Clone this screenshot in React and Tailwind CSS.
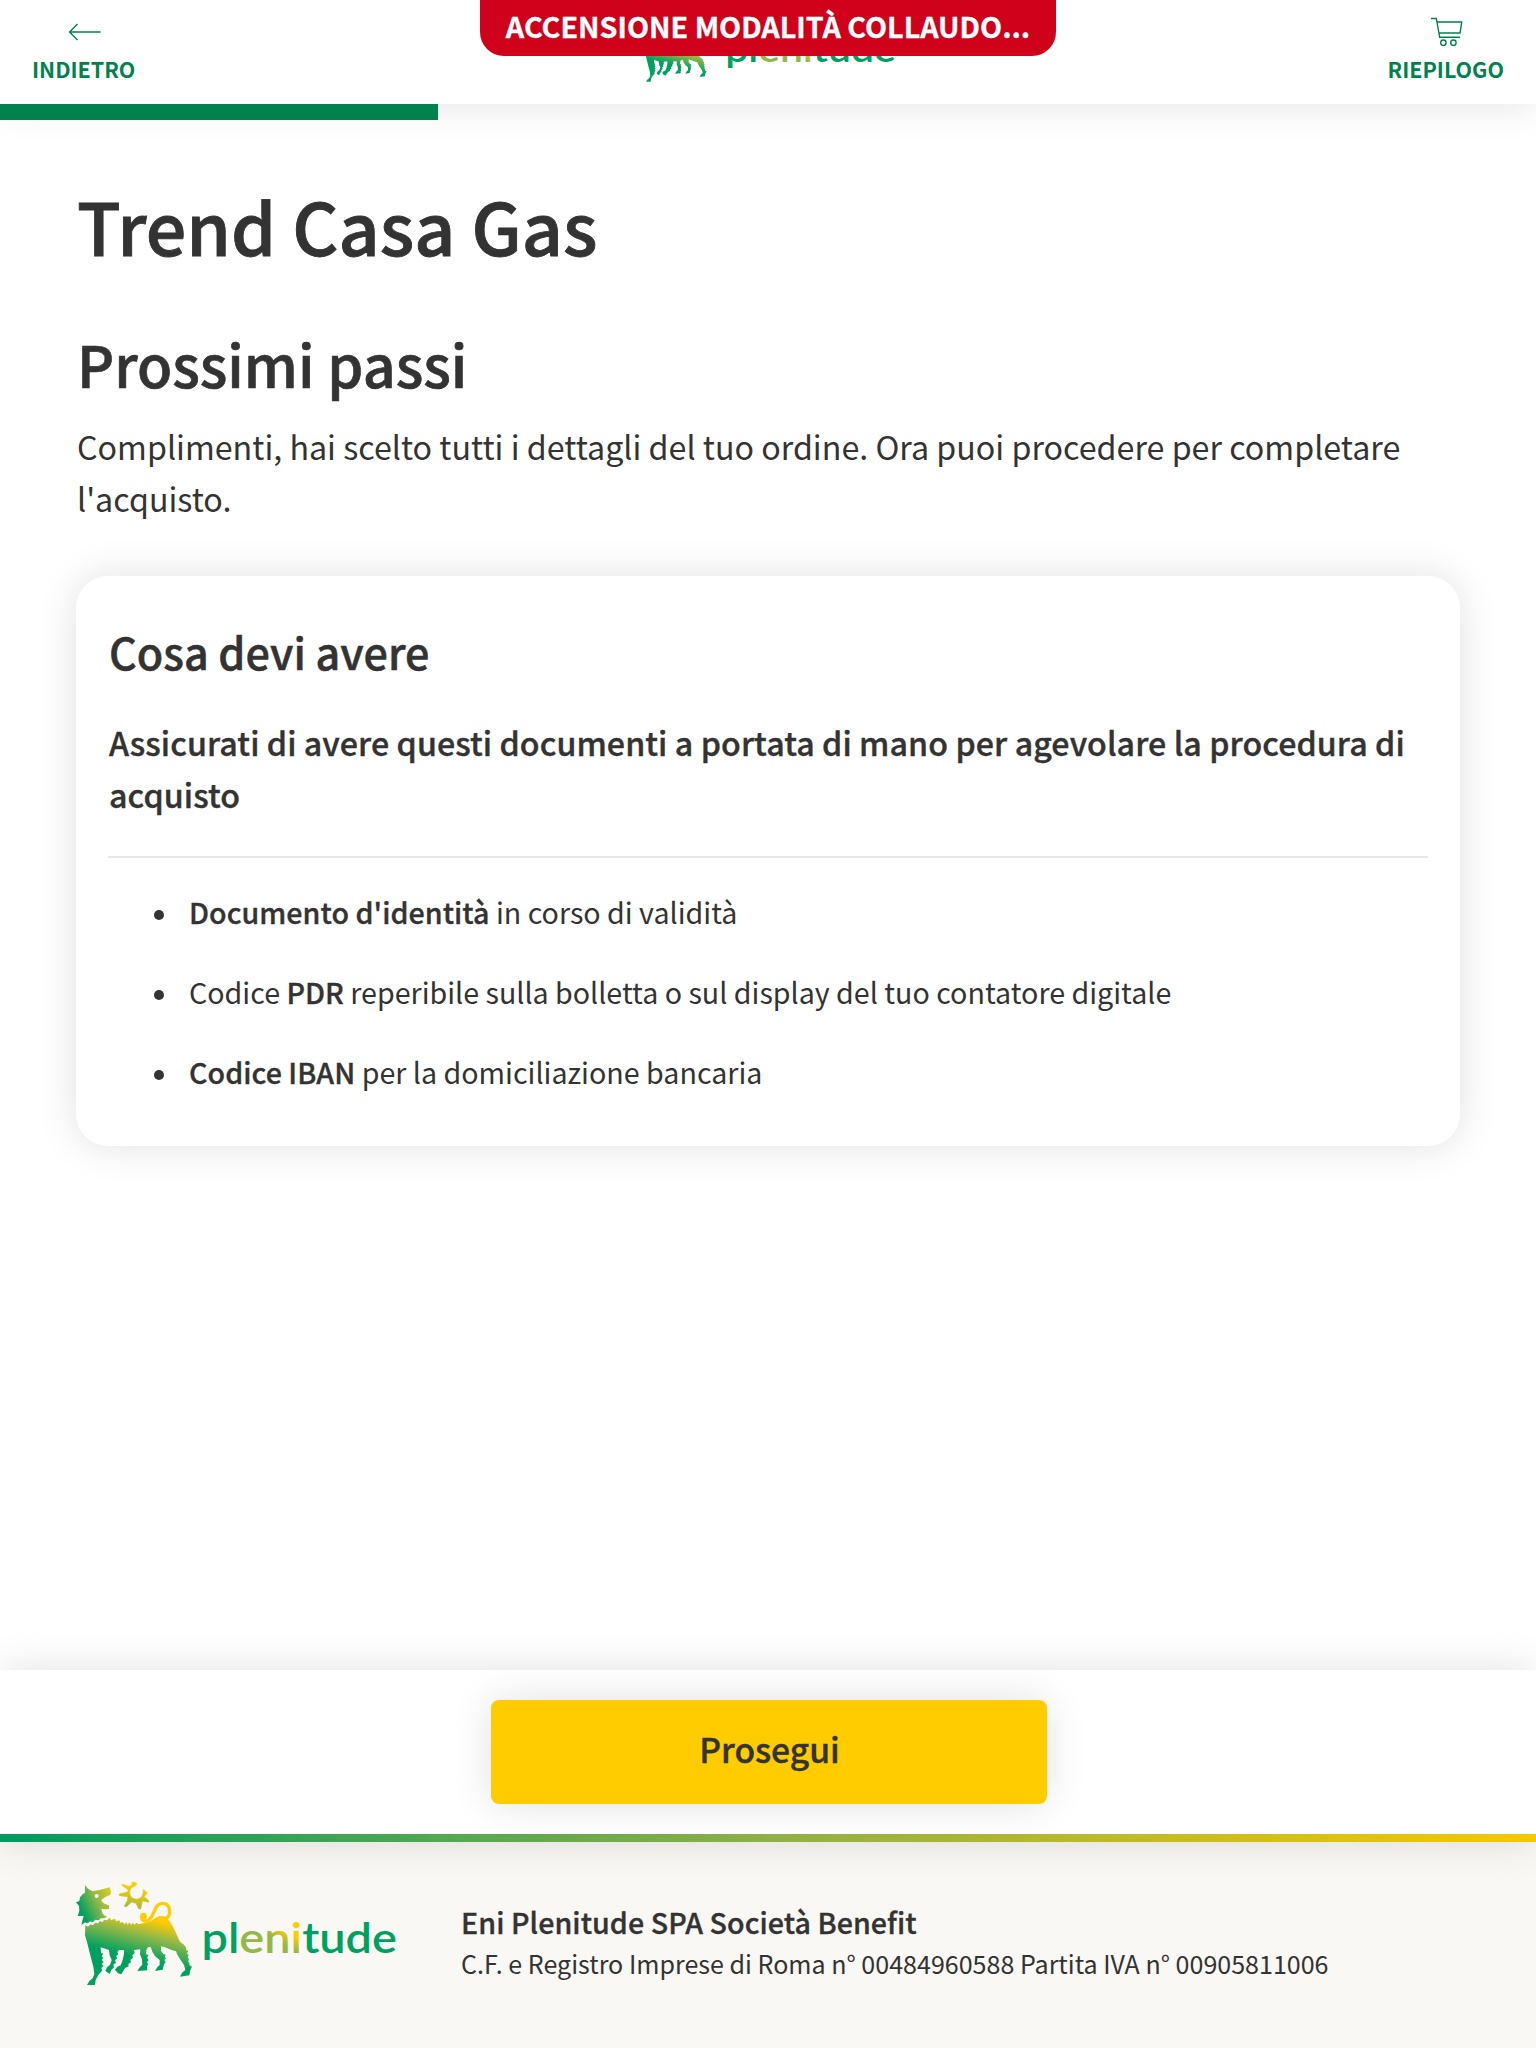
const SHADOW = "shadow-[0_0_40px_rgba(0,0,0,0.12)]";
const SEMIBOLD = "font-medium [-webkit-text-stroke:0.012em_currentColor]";

function Dog({ id }) {
  return (
    <g>
      <defs>
        <linearGradient id={`${id}-body`} gradientUnits="userSpaceOnUse" x1="290" y1="140" x2="255" y2="280">
          <stop offset="0.08" stopColor="#ffcc00" />
          <stop offset="0.43" stopColor="#93b848" />
          <stop offset="0.92" stopColor="#00a160" />
        </linearGradient>
        <linearGradient id={`${id}-head`} gradientUnits="userSpaceOnUse" x1="62" y1="118" x2="155" y2="72">
          <stop offset="0" stopColor="#00a160" />
          <stop offset="0.55" stopColor="#93b848" />
          <stop offset="1" stopColor="#d6cb1c" />
        </linearGradient>
        <linearGradient id={`${id}-sun`} gradientUnits="userSpaceOnUse" x1="235" y1="55" x2="218" y2="125">
          <stop offset="0" stopColor="#ffcc00" />
          <stop offset="1" stopColor="#93b848" />
        </linearGradient>
      </defs>
      <path
        fill={`url(#${id}-head)`}
        fillRule="evenodd"
        d="M75 45L84 56L98 64L128 58L149 52L153 69L150 75L136 81L124 89L127 96L135 102L147 106L147 117L135 118L124 116L127 130L134 137L142 140L132 145L121 145L117 151L106 149L98 157L90 154L83 160L75 157L64 166L67 152L71 138L53 138L58 122L57 108L48 97L58 93L60 82L68 73L75 68ZM110 72A6 6 0 1 0 110 84A6 6 0 1 0 110 72Z"
      />
      <path
        fill={`url(#${id}-body)`}
        d="M76 165L84 170L92 163L98 166L106 158L114 160L120 153L128 156L132 149L140 151L150 143L153 151L160 148L166 147L168 154L178 151L181 158L188 156L194 163L199 156L203 164L208 157L213 164L219 158L223 164L229 158L236 162L250 160L264 156L272 153L285 145L298 138L313 139L322 145L333 160L343 178L352 198L360 215L372 224L379 234L378 240L385 242L381 250L386 255L383 262L387 268L384 275L389 279L388 285L396 290L391 300L388 316L360 320L366 308L376 300L372 285L362 270L352 254L348 244L335 240L315 232L303 229L303 242L310 252L317 254L314 260L318 266L313 270L317 277L312 283L310 290L308 299L285 303L293 290L299 285L299 270L285 258L277 245L272 231L264 232L259 240L258 252L266 256L261 263L266 270L261 276L264 283L261 290L262 301L232 303L240 291L247 284L246 268L240 253L241 238L222 240L224 250L217 256L219 263L211 269L213 277L205 282L206 289L195 294L184 313L174 310L165 299L172 290L182 286L188 270L192 252L192 240L177 240L172 246L175 253L168 258L172 265L165 271L168 278L160 284L162 292L154 300L149 312L136 302L142 290L150 285L155 270L149 256L147 240L136 236L122 232L123 248L130 252L125 258L130 264L125 270L131 276L125 282L131 288L124 294L127 301L115 315L107 330L105 345L81 345L88 333L98 325L103 312L100 290L92 260L82 220L75 195Z"
      />
      <path
        fill="none"
        stroke="#ffcc00"
        strokeWidth="10"
        strokeLinecap="round"
        d="M311 148C326 144 330 132 329 122C328 106 318 99 306 100C288 101 286 120 276 138C268 153 252 157 246 148C241 139 246 132 252 134C257 136 257 140 254 143"
      />
      <path
        fill={`url(#${id}-sun)`}
        stroke={`url(#${id}-sun)`}
        strokeWidth="2"
        d="M187 42L205 49L217 46L215 38L222 36L231 41L225 48A20 20 0 1 0 249 70L250 58L256 64L262 68L255 77L252 80L267 92L266 97L248 92L246 98L242 117L236 116L228 100L215 96L198 111L193 108L202 92L204 80L178 77L178 72L203 66L205 60L186 46Z"
      />
    </g>
  );
}

function Wordmark({ id }) {
  return (
    <g>
      <defs>
        <linearGradient id={`${id}-eni`} gradientUnits="userSpaceOnUse" x1="70" y1="-2" x2="84" y2="-24">
          <stop offset="0.4" stopColor="#93b848" />
          <stop offset="0.9" stopColor="#ffcc00" />
        </linearGradient>
      </defs>
      <text
        x="-2.5"
        y="0"
        textLength="195.5"
        lengthAdjust="spacingAndGlyphs"
        fontSize="41.5"
        fontWeight="600"
        fontFamily="Lato, sans-serif"
        fill="#00a160"
      >
        pl<tspan fill={`url(#${id}-eni)`}>eni</tspan>tude
      </text>
    </g>
  );
}

function FooterLogo() {
  return (
    <svg className="block h-[130px] w-[340px] shrink-0" viewBox="0 0 340 130" role="img" aria-label="plenitude">
      <g transform="scale(0.33333)">
        <Dog id="footer" />
      </g>
      <g transform="translate(144 82.6)">
        <Wordmark id="footer-word" />
      </g>
    </svg>
  );
}

function HeaderLogo() {
  return (
    <svg className="block h-[84px] w-[270px]" viewBox="0 0 270 84" role="img" aria-label="plenitude">
      <g transform="translate(-2.5 15.5) scale(0.192)">
        <Dog id="header" />
      </g>
      <g transform="translate(94.3 61.5) scale(0.873)">
        <Wordmark id="header-word" />
      </g>
    </svg>
  );
}

function Item({ children }) {
  return (
    <li className="flex h-12 items-center">
      <span className="mt-1.5 mr-[25px] size-2.5 rounded-full bg-[#333]" />
      <span>{children}</span>
    </li>
  );
}

export default function App() {
  return (
    <div className="flex h-[2048px] w-[1536px] flex-col overflow-hidden bg-white font-['Noto_Sans_CJK_SC',sans-serif] text-[#333]">
      <header className={`relative z-20 flex h-[104px] shrink-0 justify-between bg-white px-8 text-[21.47px] leading-[30px] font-bold text-[#00824f] ${SHADOW}`}>
        <a className="flex flex-col items-center pt-3">
          <svg className="h-[42px] w-10" viewBox="0 0 40 42" fill="none" stroke="currentColor" strokeWidth="1.4">
            <path d="M36.5 20H5.5M13.5 12L5.5 20L13.5 28" />
          </svg>
          <span>INDIETRO</span>
        </a>
        <a className="flex flex-col items-center pt-3">
          <svg className="h-[42px] w-10" viewBox="-1 0 40 42" fill="none" stroke="currentColor" strokeWidth="1.4">
            <path d="M4 6.5H9.3L12.7 25.3H33M10 10H34.7L33 21H12" />
            <circle cx="16.4" cy="30.7" r="2.7" />
            <circle cx="26.4" cy="30.7" r="2.7" />
          </svg>
          <span>RIEPILOGO</span>
        </a>
        <div className="absolute top-0 left-[633px]">
          <HeaderLogo />
        </div>
        <div className="absolute top-0 left-[480px] flex h-14 w-[576px] justify-center rounded-b-[24px] bg-[#d0021b] text-[28.7px] leading-[51px] whitespace-nowrap text-white [-webkit-text-stroke:0.3px_currentColor]">
          ACCENSIONE MODALITÀ COLLAUDO...
        </div>
        <div className="absolute top-[104px] left-0 h-4 w-[438px] bg-[#00824f]" />
      </header>

      <main className="flex-1 px-[76px] pt-[73px]">
        <h1 className={`pl-px text-[71.7px] leading-[96px] ${SEMIBOLD}`}>Trend Casa Gas</h1>
        <h2 className={`mt-[52px] pl-px text-[57.4px] leading-[76px] ${SEMIBOLD}`}>Prossimi passi</h2>
        <p className="mt-[19px] pl-px text-[32.22px] leading-[52px]">
          Complimenti, hai scelto tutti i dettagli del tuo ordine. Ora puoi procedere per completare
          <br />
          l'acquisto.
        </p>

        <section className={`mt-[52px] h-[570px] rounded-[32px] bg-white px-8 pt-[45px] ${SHADOW}`}>
          <h3 className={`pl-px text-[43.1px] leading-[60px] ${SEMIBOLD}`}>Cosa devi avere</h3>
          <p className={`mt-[35px] pl-px text-[32.2px] leading-[52px] tracking-[0.07px] ${SEMIBOLD}`}>
            Assicurati di avere questi documenti a portata di mano per agevolare la procedura di
            <br />
            acquisto
          </p>
          <hr className="mt-9 border-t-2 border-[#e8e8e8]" />
          <ul className="mt-[30px] flex flex-col gap-8 pl-[46px] text-[28.63px] leading-[48px] [&_b]:font-medium [&_b]:tracking-[0.04px] [&_b]:[-webkit-text-stroke:0.012em_currentColor]">
            <Item>
              <b>Documento d'identità</b> in corso di validità
            </Item>
            <Item>
              Codice <b>PDR</b> reperibile sulla bolletta o sul display del tuo contatore digitale
            </Item>
            <Item>
              <b>Codice IBAN</b> per la domiciliazione bancaria
            </Item>
          </ul>
        </section>
      </main>

      <div className={`relative z-10 shrink-0 bg-white ${SHADOW}`}>
        <div className="flex h-[164px] items-center justify-center pl-0.5">
          <button className={`h-[104px] w-[556px] rounded-lg bg-[#ffcc00] pb-1.5 pl-px text-[33.6px] leading-[52px] ${SEMIBOLD} ${SHADOW}`}>
            Prosegui
          </button>
        </div>
        <div className="h-2 bg-linear-to-r/srgb from-[#009b5f] via-[#90b048] to-[#f5c800]" />
      </div>

      <footer className="flex h-[206px] shrink-0 bg-[#f9f8f4] pt-7 pl-[60px]">
        <FooterLogo />
        <div className="ml-[61px] pt-8">
          <p className={`text-[28.63px] leading-[40px] tracking-[0.06px] ${SEMIBOLD}`}>Eni Plenitude SPA Società Benefit</p>
          <p className="mt-px text-[25.05px] leading-[40px]">C.F. e Registro Imprese di Roma n° 00484960588 Partita IVA n° 00905811006</p>
        </div>
      </footer>
    </div>
  );
}
